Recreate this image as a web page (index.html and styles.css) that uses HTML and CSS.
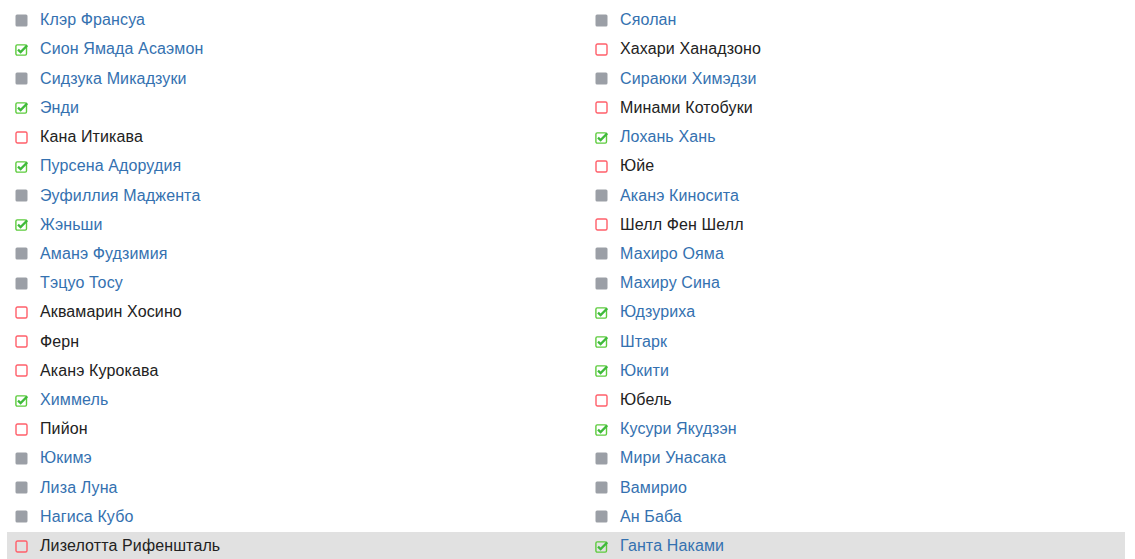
FILE: index.html
```html
<!DOCTYPE html>
<html>
<head>
<meta charset="utf-8">
<link rel="stylesheet" href="styles.css">
</head>
<body>
<svg width="0" height="0" class="defs">
  <defs>
    <symbol id="i-gray" viewBox="0 0 13 13"><rect x="0.5" y="0.5" width="12" height="12" rx="1.5" fill="#9b9fa6"/></symbol>
    <symbol id="i-red" viewBox="0 0 13 13"><rect x="1" y="1" width="11" height="11" rx="1.5" fill="none" stroke="#ff5f6a" stroke-width="1.4"/></symbol>
    <symbol id="i-check" viewBox="0 0 13 13"><rect x="0.9" y="1.9" width="10.6" height="10.2" rx="1.3" fill="none" stroke="#5ccb3c" stroke-width="1.4"/><path d="M3 6.6 L5.6 9.1 L12.3 2.4" fill="none" stroke="#3fba3a" stroke-width="2.3" stroke-linejoin="miter"/></symbol>
  </defs>
</svg>
<div class="list">
  <div class="row"><div class="cell"><svg class="ic"><use href="#i-gray"/></svg><span class="name link">Клэр Франсуа</span></div><div class="cell"><svg class="ic"><use href="#i-gray"/></svg><span class="name link">Сяолан</span></div></div>
  <div class="row"><div class="cell"><svg class="ic"><use href="#i-check"/></svg><span class="name link">Сион Ямада Асаэмон</span></div><div class="cell"><svg class="ic"><use href="#i-red"/></svg><span class="name">Хахари Ханадзоно</span></div></div>
  <div class="row"><div class="cell"><svg class="ic"><use href="#i-gray"/></svg><span class="name link">Сидзука Микадзуки</span></div><div class="cell"><svg class="ic"><use href="#i-gray"/></svg><span class="name link">Сираюки Химэдзи</span></div></div>
  <div class="row"><div class="cell"><svg class="ic"><use href="#i-check"/></svg><span class="name link">Энди</span></div><div class="cell"><svg class="ic"><use href="#i-red"/></svg><span class="name">Минами Котобуки</span></div></div>
  <div class="row"><div class="cell"><svg class="ic"><use href="#i-red"/></svg><span class="name">Кана Итикава</span></div><div class="cell"><svg class="ic"><use href="#i-check"/></svg><span class="name link">Лохань Хань</span></div></div>
  <div class="row"><div class="cell"><svg class="ic"><use href="#i-check"/></svg><span class="name link">Пурсена Адорудия</span></div><div class="cell"><svg class="ic"><use href="#i-red"/></svg><span class="name">Юйе</span></div></div>
  <div class="row"><div class="cell"><svg class="ic"><use href="#i-gray"/></svg><span class="name link">Эуфиллия Маджента</span></div><div class="cell"><svg class="ic"><use href="#i-gray"/></svg><span class="name link">Аканэ Киносита</span></div></div>
  <div class="row"><div class="cell"><svg class="ic"><use href="#i-check"/></svg><span class="name link">Жэньши</span></div><div class="cell"><svg class="ic"><use href="#i-red"/></svg><span class="name">Шелл Фен Шелл</span></div></div>
  <div class="row"><div class="cell"><svg class="ic"><use href="#i-gray"/></svg><span class="name link">Аманэ Фудзимия</span></div><div class="cell"><svg class="ic"><use href="#i-gray"/></svg><span class="name link">Махиро Ояма</span></div></div>
  <div class="row"><div class="cell"><svg class="ic"><use href="#i-gray"/></svg><span class="name link">Тэцуо Тосу</span></div><div class="cell"><svg class="ic"><use href="#i-gray"/></svg><span class="name link">Махиру Сина</span></div></div>
  <div class="row"><div class="cell"><svg class="ic"><use href="#i-red"/></svg><span class="name">Аквамарин Хосино</span></div><div class="cell"><svg class="ic"><use href="#i-check"/></svg><span class="name link">Юдзуриха</span></div></div>
  <div class="row"><div class="cell"><svg class="ic"><use href="#i-red"/></svg><span class="name">Ферн</span></div><div class="cell"><svg class="ic"><use href="#i-check"/></svg><span class="name link">Штарк</span></div></div>
  <div class="row"><div class="cell"><svg class="ic"><use href="#i-red"/></svg><span class="name">Аканэ Курокава</span></div><div class="cell"><svg class="ic"><use href="#i-check"/></svg><span class="name link">Юкити</span></div></div>
  <div class="row"><div class="cell"><svg class="ic"><use href="#i-check"/></svg><span class="name link">Химмель</span></div><div class="cell"><svg class="ic"><use href="#i-red"/></svg><span class="name">Юбель</span></div></div>
  <div class="row"><div class="cell"><svg class="ic"><use href="#i-red"/></svg><span class="name">Пийон</span></div><div class="cell"><svg class="ic"><use href="#i-check"/></svg><span class="name link">Кусури Якудзэн</span></div></div>
  <div class="row"><div class="cell"><svg class="ic"><use href="#i-gray"/></svg><span class="name link">Юкимэ</span></div><div class="cell"><svg class="ic"><use href="#i-gray"/></svg><span class="name link">Мири Унасака</span></div></div>
  <div class="row"><div class="cell"><svg class="ic"><use href="#i-gray"/></svg><span class="name link">Лиза Луна</span></div><div class="cell"><svg class="ic"><use href="#i-gray"/></svg><span class="name link">Вамирио</span></div></div>
  <div class="row"><div class="cell"><svg class="ic"><use href="#i-gray"/></svg><span class="name link">Нагиса Кубо</span></div><div class="cell"><svg class="ic"><use href="#i-gray"/></svg><span class="name link">Ан Баба</span></div></div>
  <div class="row hl"><div class="cell"><svg class="ic"><use href="#i-red"/></svg><span class="name">Лизелотта Рифеншталь</span></div><div class="cell"><svg class="ic"><use href="#i-check"/></svg><span class="name link">Ганта Наками</span></div></div>
</div>
</body>
</html>
```
FILE: styles.css
```css
html, body {
  margin: 0;
  padding: 0;
  background: #fff;
}
body {
  font-family: "Liberation Sans", Arial, sans-serif;
  font-size: 16px;
  color: #222;
  overflow: hidden;
}
.defs {
  position: absolute;
  width: 0;
  height: 0;
}
.list {
  margin-left: 7px;
  width: 1118px;
  padding-top: 5.6px;
}
.row {
  display: grid;
  grid-template-columns: 580px 1fr;
  height: 29.22px;
}
.row.hl {
  background: #e1e1e1;
}
.cell {
  display: flex;
  align-items: center;
  padding-left: 8px;
}
.ic {
  width: 13px;
  height: 13px;
  flex: none;
  margin-right: 12px;
}
.name {
  line-height: 20px;
  white-space: nowrap;
  letter-spacing: 0.12px;
}
.name.link {
  color: #3471b0;
}
```
